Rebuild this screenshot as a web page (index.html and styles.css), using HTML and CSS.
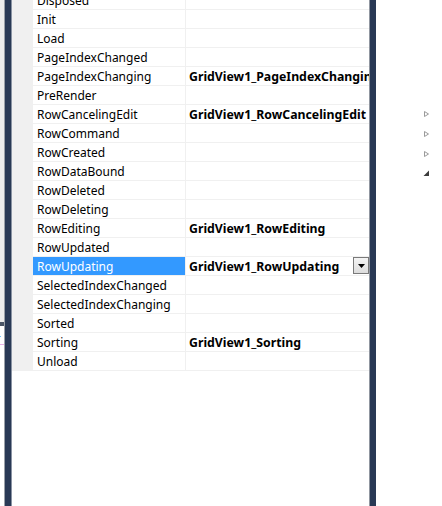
FILE: index.html
```html
<!DOCTYPE html>
<html>
<head>
<meta charset="utf-8">
<link rel="stylesheet" href="styles.css">
</head>
<body>
<div class="frame">
  <div class="edge">
    <div class="edge-top"></div>
    <div class="edge-bar"></div>
    <div class="edge-low"><span class="edge-glyph">r</span></div>
  </div>
  <div class="navy left-navy"></div>
  <div class="grid">
    <div class="rows">
      <div class="row"><div class="name">Disposed</div><div class="value"></div></div>
      <div class="row"><div class="name">Init</div><div class="value"></div></div>
      <div class="row"><div class="name">Load</div><div class="value"></div></div>
      <div class="row"><div class="name">PageIndexChanged</div><div class="value"></div></div>
      <div class="row"><div class="name">PageIndexChanging</div><div class="value">GridView1_PageIndexChanging</div></div>
      <div class="row"><div class="name">PreRender</div><div class="value"></div></div>
      <div class="row"><div class="name">RowCancelingEdit</div><div class="value">GridView1_RowCancelingEdit</div></div>
      <div class="row"><div class="name">RowCommand</div><div class="value"></div></div>
      <div class="row"><div class="name">RowCreated</div><div class="value"></div></div>
      <div class="row"><div class="name">RowDataBound</div><div class="value"></div></div>
      <div class="row"><div class="name">RowDeleted</div><div class="value"></div></div>
      <div class="row"><div class="name">RowDeleting</div><div class="value"></div></div>
      <div class="row"><div class="name">RowEditing</div><div class="value">GridView1_RowEditing</div></div>
      <div class="row"><div class="name">RowUpdated</div><div class="value"></div></div>
      <div class="row selected"><div class="name">RowUpdating</div><div class="value">GridView1_RowUpdating<span class="drop"><svg width="7" height="4" viewBox="0 0 7 4"><path d="M0 0H7L3.5 4Z" fill="#000"/></svg></span></div></div>
      <div class="row"><div class="name">SelectedIndexChanged</div><div class="value"></div></div>
      <div class="row"><div class="name">SelectedIndexChanging</div><div class="value"></div></div>
      <div class="row"><div class="name">Sorted</div><div class="value"></div></div>
      <div class="row"><div class="name">Sorting</div><div class="value">GridView1_Sorting</div></div>
      <div class="row"><div class="name">Unload</div><div class="value"></div></div>
    </div>
  </div>
  <div class="navy right-navy"></div>
  <div class="side">
    <svg class="tri t1" width="7" height="8" viewBox="0 0 7 8"><path d="M1.5 1.5L5.5 4L1.5 6.5Z" fill="none" stroke="#9a9a9a" stroke-width="1"/></svg>
    <svg class="tri t2" width="7" height="8" viewBox="0 0 7 8"><path d="M1.5 1.5L5.5 4L1.5 6.5Z" fill="none" stroke="#9a9a9a" stroke-width="1"/></svg>
    <svg class="tri t3" width="7" height="8" viewBox="0 0 7 8"><path d="M1.5 1.5L5.5 4L1.5 6.5Z" fill="none" stroke="#9a9a9a" stroke-width="1"/></svg>
    <svg class="tri t4" width="7" height="7" viewBox="0 0 7 7"><path d="M6 0.5V6H0.5Z" fill="#3c3c3c"/></svg>
  </div>
</div>
</body>
</html>
```
FILE: styles.css
```css
html, body {
  margin: 0;
  padding: 0;
  background: #ffffff;
}
.frame {
  display: flex;
  width: 442px;
  height: 506px;
  overflow: hidden;
  font-family: "Noto Sans", "Open Sans", sans-serif;
  font-size: 12px;
}
.edge {
  width: 4px;
  display: flex;
  flex-direction: column;
  background: #f0f0f0;
  border-right: 1px solid #9aa0a8;
}
.edge-top {
  height: 322px;
  background: #ececec;
}
.edge-bar {
  height: 4px;
  background: #4a5566;
}
.edge-low {
  flex: 1;
  background: #ffffff;
  position: relative;
  overflow: hidden;
}
.edge-glyph {
  position: absolute;
  left: -4px;
  top: 6px;
  color: #3355ee;
  font-size: 11px;
  line-height: 12px;
  border-bottom: 1px solid #e8b0e8;
  width: 8px;
}
.navy {
  background: #293955;
}
.left-navy {
  width: 6px;
  border-right: 1px solid #8a93a3;
}
.right-navy {
  width: 6px;
  border-left: 1px solid #9096a0;
}
.grid {
  width: 336px;
  padding-left: 21px;
  background: linear-gradient(#f0f0f0, #f0f0f0) no-repeat 0 0 / 21px 371px, #ffffff;
  overflow: hidden;
}
.rows {
  margin-top: -9px;
}
.row {
  display: flex;
  height: 18px;
  border-bottom: 1px solid #f0f0f0;
  color: #000000;
}
.name {
  width: 148px;
  padding-left: 4px;
  padding-top: 2px;
  line-height: 16px;
  border-right: 1px solid #f0f0f0;
  white-space: nowrap;
  overflow: hidden;
}
.value {
  flex: 1;
  padding-left: 3px;
  padding-top: 2px;
  line-height: 16px;
  font-weight: bold;
  font-size: 12.3px;
  white-space: nowrap;
  overflow: hidden;
  position: relative;
}
.selected .name {
  background: #3399ff;
  color: #ffffff;
}
.drop {
  position: absolute;
  right: 0;
  top: 0;
  width: 14px;
  height: 15px;
  border: 1px solid #7a7a7a;
  background: linear-gradient(#f4f4f4, #dcdcdc);
  display: flex;
  align-items: center;
  justify-content: center;
}
.side {
  flex: 1;
  position: relative;
}
.tri {
  position: absolute;
  left: 47px;
  display: block;
}
.t1 { top: 110px; }
.t2 { top: 130px; }
.t3 { top: 150px; }
.t4 { top: 170px; }
```
